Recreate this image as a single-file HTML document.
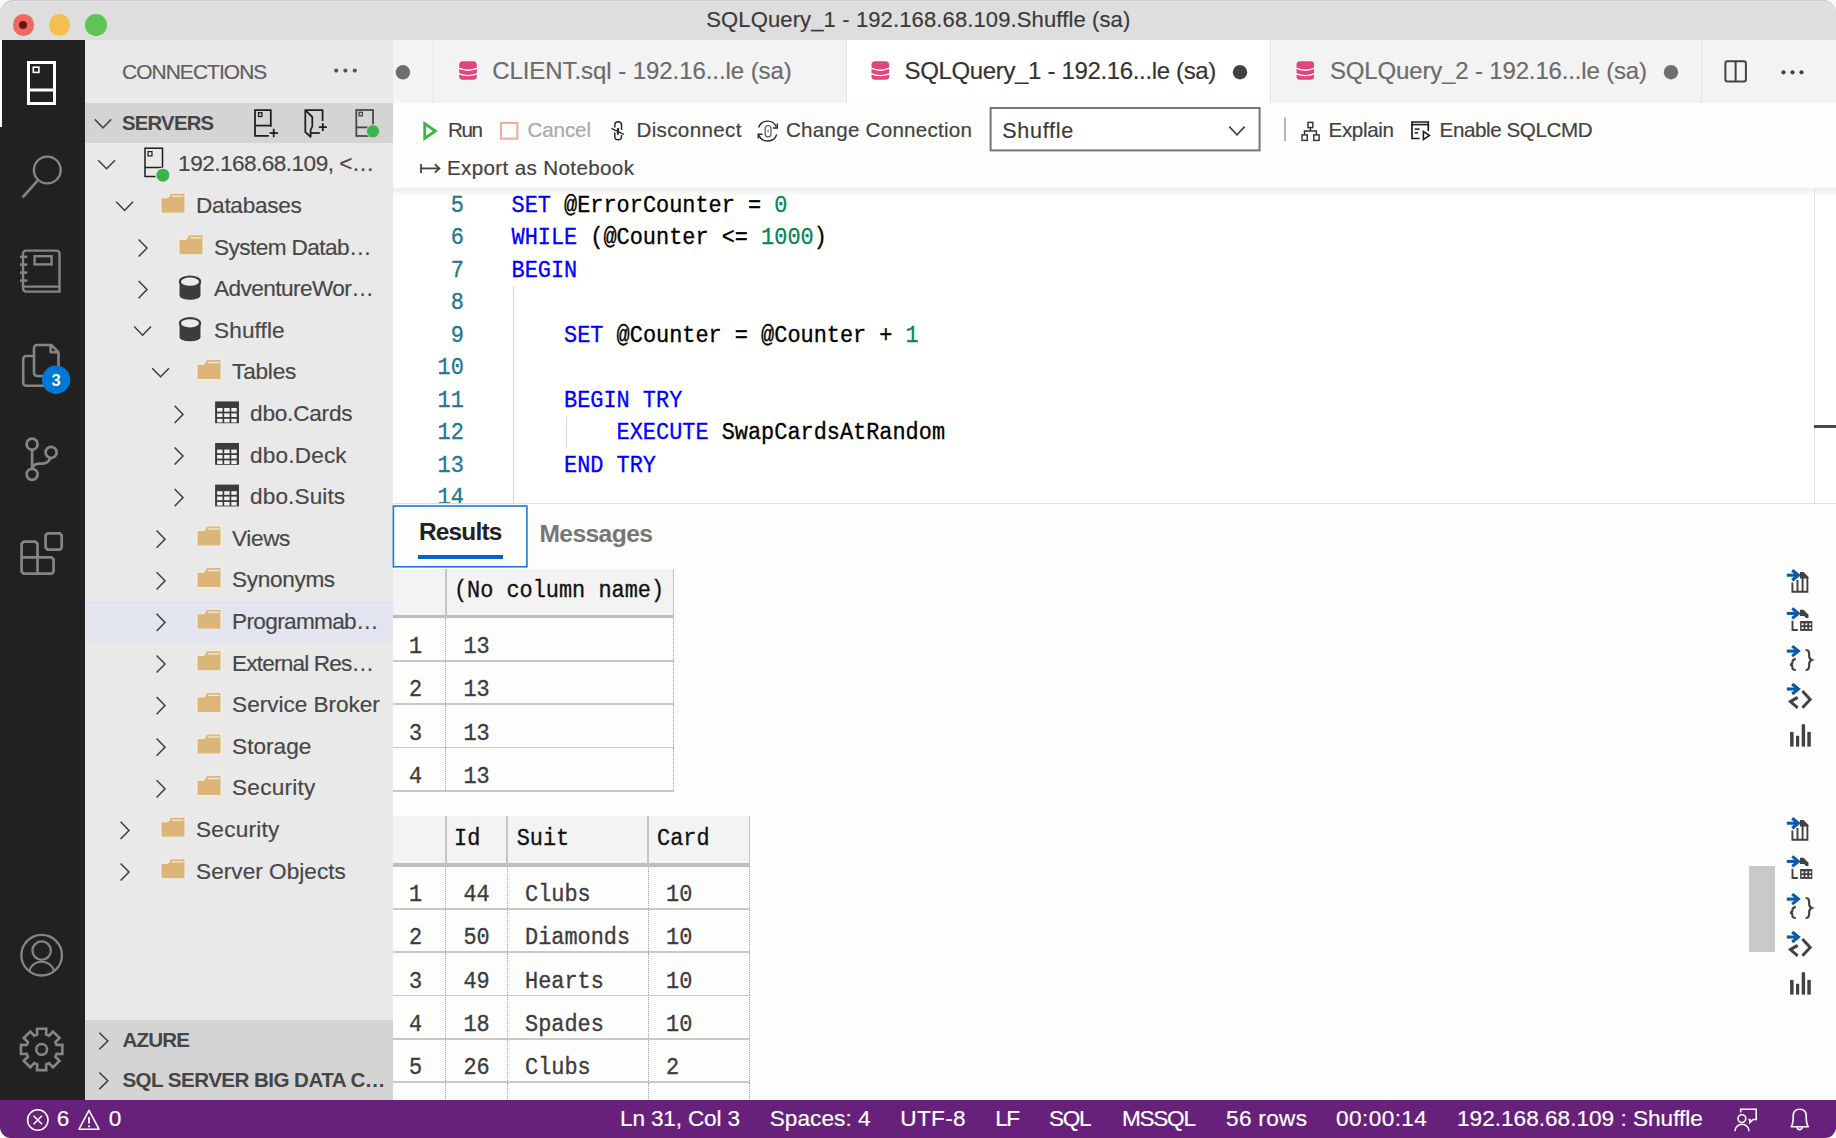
<!DOCTYPE html>
<html><head><meta charset="utf-8"><style>
html,body{margin:0;padding:0;width:1836px;height:1138px;overflow:hidden;background:#fff;}
.a{position:absolute;}
.t{position:absolute;white-space:pre;-webkit-text-stroke:0.18px currentColor;}
.mono{font-family:'Liberation Mono',monospace;font-size:21.9px;line-height:21.9px;white-space:pre;transform:scaleY(1.12);transform-origin:0 17.39px;-webkit-text-stroke:0.3px currentColor;}
svg.a{overflow:visible;}
</style></head><body>
<div class="a" style="left:0px;top:0px;width:1836px;height:1138px;background:#f8f8f8;"></div>
<div class="a" style="left:0px;top:0.4px;width:1836px;height:39.6px;background:#dedede;border-radius:13px 13px 0 0;box-sizing:border-box;border-top:0.9px solid #cacaca;"></div>
<div class="a" style="left:13px;top:1.3px;width:1810px;height:0.8px;background:#e9e9e9;"></div>
<div class="a" style="left:12.65px;top:14.45px;width:21.5px;height:21.5px;border-radius:50%;background:#ec6a5f;"></div>
<div class="a" style="left:48.95px;top:14.45px;width:21.5px;height:21.5px;border-radius:50%;background:#f4be50;"></div>
<div class="a" style="left:85.25px;top:14.45px;width:21.5px;height:21.5px;border-radius:50%;background:#61c555;"></div>
<div class="a" style="left:19.4px;top:21.2px;width:8px;height:8px;border-radius:50%;background:#6e1510;"></div>
<div class="a" style="left:0px;top:40px;width:85px;height:1060px;background:#212121;"></div>
<div class="a" style="left:0px;top:40px;width:2px;height:87px;background:#ffffff;"></div>
<div class="a" style="left:85px;top:40px;width:307.5px;height:1060px;background:#e9e9e9;"></div>
<div class="a" style="left:85px;top:103px;width:308px;height:40px;background:#d4d4d4;"></div>
<div class="a" style="left:85px;top:600.6px;width:308px;height:41.6px;background:#e2e4ef;"></div>
<div class="a" style="left:85px;top:1020px;width:308px;height:80px;background:#d4d4d4;"></div>
<div class="a" style="left:393px;top:188px;width:1443px;height:315px;background:#fffffe;"></div>
<div class="a" style="left:393px;top:503px;width:1443px;height:1px;background:#dddddd;"></div>
<div class="a" style="left:393px;top:504px;width:1443px;height:596px;background:#fdfdfc;"></div>
<div class="a" style="left:393px;top:40px;width:1443px;height:63px;background:#f3f3f3;"></div>
<div class="a" style="left:846px;top:40px;width:424px;height:63px;background:#ffffff;"></div>
<div class="a" style="left:433px;top:40px;width:1px;height:63px;background:#e4e4e4;"></div>
<div class="a" style="left:845.5px;top:40px;width:1px;height:63px;background:#e4e4e4;"></div>
<div class="a" style="left:1269.5px;top:40px;width:1px;height:63px;background:#e4e4e4;"></div>
<div class="a" style="left:1701px;top:40px;width:1px;height:63px;background:#e4e4e4;"></div>
<div class="a" style="left:393px;top:103px;width:1443px;height:85px;background:#fdfdfc;"></div>
<div class="a" style="left:393px;top:188px;width:1443px;height:9px;background:linear-gradient(rgba(0,0,0,0.07),rgba(0,0,0,0));"></div>
<div class="a" style="left:0px;top:1100px;width:1836px;height:38px;background:#68217a;border-radius:0 0 11px 11px;"></div>
<div class="a" style="left:393px;top:188px;width:1421px;height:315px;overflow:hidden;">
<div class="a mono" style="left:0px;width:70.8px;text-align:right;top:7.91px;color:#237893;">5</div>
<div class="a mono" style="left:118.5px;top:7.91px;white-space:pre;"><span style="color:#0000ff">SET</span><span style="color:#000000"> @ErrorCounter = </span><span style="color:#098658">0</span></div>
<div class="a mono" style="left:0px;width:70.8px;text-align:right;top:40.36px;color:#237893;">6</div>
<div class="a mono" style="left:118.5px;top:40.36px;white-space:pre;"><span style="color:#0000ff">WHILE</span><span style="color:#000000"> (@Counter &lt;= </span><span style="color:#098658">1000</span><span style="color:#000000">)</span></div>
<div class="a mono" style="left:0px;width:70.8px;text-align:right;top:72.81px;color:#237893;">7</div>
<div class="a mono" style="left:118.5px;top:72.81px;white-space:pre;"><span style="color:#0000ff">BEGIN</span></div>
<div class="a mono" style="left:0px;width:70.8px;text-align:right;top:105.26px;color:#237893;">8</div>
<div class="a mono" style="left:118.5px;top:105.26px;white-space:pre;"></div>
<div class="a mono" style="left:0px;width:70.8px;text-align:right;top:137.71px;color:#237893;">9</div>
<div class="a mono" style="left:118.5px;top:137.71px;white-space:pre;"><span style="color:#000000">    </span><span style="color:#0000ff">SET</span><span style="color:#000000"> @Counter = @Counter + </span><span style="color:#098658">1</span></div>
<div class="a mono" style="left:0px;width:70.8px;text-align:right;top:170.16px;color:#237893;">10</div>
<div class="a mono" style="left:118.5px;top:170.16px;white-space:pre;"></div>
<div class="a mono" style="left:0px;width:70.8px;text-align:right;top:202.61px;color:#237893;">11</div>
<div class="a mono" style="left:118.5px;top:202.61px;white-space:pre;"><span style="color:#000000">    </span><span style="color:#0000ff">BEGIN TRY</span></div>
<div class="a mono" style="left:0px;width:70.8px;text-align:right;top:235.06px;color:#237893;">12</div>
<div class="a mono" style="left:118.5px;top:235.06px;white-space:pre;"><span style="color:#000000">        </span><span style="color:#0000ff">EXECUTE</span><span style="color:#000000"> SwapCardsAtRandom</span></div>
<div class="a mono" style="left:0px;width:70.8px;text-align:right;top:267.51px;color:#237893;">13</div>
<div class="a mono" style="left:118.5px;top:267.51px;white-space:pre;"><span style="color:#000000">    </span><span style="color:#0000ff">END TRY</span></div>
<div class="a mono" style="left:0px;width:70.8px;text-align:right;top:299.96px;color:#237893;">14</div>
<div class="a mono" style="left:118.5px;top:299.96px;white-space:pre;"></div>
<div class="a" style="left:120px;top:97.60000000000002px;width:1px;height:217.39999999999998px;background:#d3d3d3;"></div>
<div class="a" style="left:172.5px;top:228.5px;width:1px;height:31px;background:#d3d3d3;"></div>
</div>
<div class="a" style="left:1814px;top:188px;width:1px;height:315px;background:#e4e4e4;"></div>
<div class="a" style="left:1814px;top:425px;width:22px;height:3px;background:#4b4b4b;"></div>
<svg class="a" style="left:0;top:0" width="600" height="600"><rect x="393.4" y="506" width="133.5" height="60.8" fill="none" stroke="#1a7ad4" stroke-width="1.6"/></svg>
<div class="a" style="left:417.7px;top:555px;width:85.3px;height:4px;background:#0064c8;"></div>
<div class="a" style="left:0;top:0;width:1836px;height:1100px;overflow:hidden;">
<div class="a" style="left:393px;top:568.5px;width:280.79999999999995px;height:50px;background:#f3f3f3;"></div>
<div class="a" style="left:393px;top:615.1px;width:280.79999999999995px;height:3.4px;background:#bebebe;"></div>
<div class="a" style="left:445px;top:568.5px;width:1.6px;height:50px;background:#c4c4c4;"></div>
<div class="a" style="left:672.8px;top:568.5px;width:1.6px;height:50px;background:#c4c4c4;"></div>
<div class="a mono" style="left:453.9px;top:581.11px;color:#111;">(No column name)</div>
<div class="a" style="left:393px;top:660.0px;width:280.79999999999995px;height:1.8px;background:#c8c8c8;"></div>
<div class="a" style="left:445.4px;top:618.5px;width:0;height:41.5px;border-left:1.3px dotted #a0a0a0;"></div>
<div class="a" style="left:673.2px;top:618.5px;width:0;height:41.5px;border-left:1.3px dotted #a0a0a0;"></div>
<div class="a mono" style="left:409px;top:636.91px;color:#3c3c3c;">1</div>
<div class="a mono" style="left:463.4px;top:636.91px;color:#3c3c3c;">13</div>
<div class="a" style="left:393px;top:703.3px;width:280.79999999999995px;height:1.8px;background:#c8c8c8;"></div>
<div class="a" style="left:445.4px;top:661.8px;width:0;height:41.5px;border-left:1.3px dotted #a0a0a0;"></div>
<div class="a" style="left:673.2px;top:661.8px;width:0;height:41.5px;border-left:1.3px dotted #a0a0a0;"></div>
<div class="a mono" style="left:409px;top:680.21px;color:#3c3c3c;">2</div>
<div class="a mono" style="left:463.4px;top:680.21px;color:#3c3c3c;">13</div>
<div class="a" style="left:393px;top:746.5999999999999px;width:280.79999999999995px;height:1.8px;background:#c8c8c8;"></div>
<div class="a" style="left:445.4px;top:705.1px;width:0;height:41.5px;border-left:1.3px dotted #a0a0a0;"></div>
<div class="a" style="left:673.2px;top:705.1px;width:0;height:41.5px;border-left:1.3px dotted #a0a0a0;"></div>
<div class="a mono" style="left:409px;top:723.51px;color:#3c3c3c;">3</div>
<div class="a mono" style="left:463.4px;top:723.51px;color:#3c3c3c;">13</div>
<div class="a" style="left:393px;top:789.8999999999999px;width:280.79999999999995px;height:1.8px;background:#c8c8c8;"></div>
<div class="a" style="left:445.4px;top:748.4px;width:0;height:41.5px;border-left:1.3px dotted #a0a0a0;"></div>
<div class="a" style="left:673.2px;top:748.4px;width:0;height:41.5px;border-left:1.3px dotted #a0a0a0;"></div>
<div class="a mono" style="left:409px;top:766.81px;color:#3c3c3c;">4</div>
<div class="a mono" style="left:463.4px;top:766.81px;color:#3c3c3c;">13</div>
<div class="a" style="left:393px;top:816.2px;width:356.70000000000005px;height:50.4px;background:#f3f3f3;"></div>
<div class="a" style="left:393px;top:863.2px;width:356.70000000000005px;height:3.4px;background:#bebebe;"></div>
<div class="a" style="left:445px;top:816.2px;width:1.6px;height:50.4px;background:#c4c4c4;"></div>
<div class="a" style="left:506.3px;top:816.2px;width:1.6px;height:50.4px;background:#c4c4c4;"></div>
<div class="a" style="left:647.4px;top:816.2px;width:1.6px;height:50.4px;background:#c4c4c4;"></div>
<div class="a" style="left:748.7px;top:816.2px;width:1.6px;height:50.4px;background:#c4c4c4;"></div>
<div class="a mono" style="left:454.0px;top:828.81px;color:#111;">Id</div>
<div class="a mono" style="left:516.7px;top:828.81px;color:#111;">Suit</div>
<div class="a mono" style="left:657.0px;top:828.81px;color:#111;">Card</div>
<div class="a" style="left:393px;top:908.1px;width:356.70000000000005px;height:1.8px;background:#c8c8c8;"></div>
<div class="a" style="left:445.4px;top:866.6px;width:0;height:41.5px;border-left:1.3px dotted #a0a0a0;"></div>
<div class="a" style="left:506.7px;top:866.6px;width:0;height:41.5px;border-left:1.3px dotted #a0a0a0;"></div>
<div class="a" style="left:647.8px;top:866.6px;width:0;height:41.5px;border-left:1.3px dotted #a0a0a0;"></div>
<div class="a" style="left:749.1px;top:866.6px;width:0;height:41.5px;border-left:1.3px dotted #a0a0a0;"></div>
<div class="a mono" style="left:409px;top:885.01px;color:#3c3c3c;">1</div>
<div class="a mono" style="left:463.4px;top:885.01px;color:#3c3c3c;">44</div>
<div class="a mono" style="left:525.0px;top:885.01px;color:#3c3c3c;">Clubs</div>
<div class="a mono" style="left:666.0px;top:885.01px;color:#3c3c3c;">10</div>
<div class="a" style="left:393px;top:951.4px;width:356.70000000000005px;height:1.8px;background:#c8c8c8;"></div>
<div class="a" style="left:445.4px;top:909.9px;width:0;height:41.5px;border-left:1.3px dotted #a0a0a0;"></div>
<div class="a" style="left:506.7px;top:909.9px;width:0;height:41.5px;border-left:1.3px dotted #a0a0a0;"></div>
<div class="a" style="left:647.8px;top:909.9px;width:0;height:41.5px;border-left:1.3px dotted #a0a0a0;"></div>
<div class="a" style="left:749.1px;top:909.9px;width:0;height:41.5px;border-left:1.3px dotted #a0a0a0;"></div>
<div class="a mono" style="left:409px;top:928.31px;color:#3c3c3c;">2</div>
<div class="a mono" style="left:463.4px;top:928.31px;color:#3c3c3c;">50</div>
<div class="a mono" style="left:525.0px;top:928.31px;color:#3c3c3c;">Diamonds</div>
<div class="a mono" style="left:666.0px;top:928.31px;color:#3c3c3c;">10</div>
<div class="a" style="left:393px;top:994.6999999999999px;width:356.70000000000005px;height:1.8px;background:#c8c8c8;"></div>
<div class="a" style="left:445.4px;top:953.2px;width:0;height:41.5px;border-left:1.3px dotted #a0a0a0;"></div>
<div class="a" style="left:506.7px;top:953.2px;width:0;height:41.5px;border-left:1.3px dotted #a0a0a0;"></div>
<div class="a" style="left:647.8px;top:953.2px;width:0;height:41.5px;border-left:1.3px dotted #a0a0a0;"></div>
<div class="a" style="left:749.1px;top:953.2px;width:0;height:41.5px;border-left:1.3px dotted #a0a0a0;"></div>
<div class="a mono" style="left:409px;top:971.61px;color:#3c3c3c;">3</div>
<div class="a mono" style="left:463.4px;top:971.61px;color:#3c3c3c;">49</div>
<div class="a mono" style="left:525.0px;top:971.61px;color:#3c3c3c;">Hearts</div>
<div class="a mono" style="left:666.0px;top:971.61px;color:#3c3c3c;">10</div>
<div class="a" style="left:393px;top:1038.0px;width:356.70000000000005px;height:1.8px;background:#c8c8c8;"></div>
<div class="a" style="left:445.4px;top:996.5px;width:0;height:41.5px;border-left:1.3px dotted #a0a0a0;"></div>
<div class="a" style="left:506.7px;top:996.5px;width:0;height:41.5px;border-left:1.3px dotted #a0a0a0;"></div>
<div class="a" style="left:647.8px;top:996.5px;width:0;height:41.5px;border-left:1.3px dotted #a0a0a0;"></div>
<div class="a" style="left:749.1px;top:996.5px;width:0;height:41.5px;border-left:1.3px dotted #a0a0a0;"></div>
<div class="a mono" style="left:409px;top:1014.91px;color:#3c3c3c;">4</div>
<div class="a mono" style="left:463.4px;top:1014.91px;color:#3c3c3c;">18</div>
<div class="a mono" style="left:525.0px;top:1014.91px;color:#3c3c3c;">Spades</div>
<div class="a mono" style="left:666.0px;top:1014.91px;color:#3c3c3c;">10</div>
<div class="a" style="left:393px;top:1081.3px;width:356.70000000000005px;height:1.8px;background:#c8c8c8;"></div>
<div class="a" style="left:445.4px;top:1039.8px;width:0;height:41.5px;border-left:1.3px dotted #a0a0a0;"></div>
<div class="a" style="left:506.7px;top:1039.8px;width:0;height:41.5px;border-left:1.3px dotted #a0a0a0;"></div>
<div class="a" style="left:647.8px;top:1039.8px;width:0;height:41.5px;border-left:1.3px dotted #a0a0a0;"></div>
<div class="a" style="left:749.1px;top:1039.8px;width:0;height:41.5px;border-left:1.3px dotted #a0a0a0;"></div>
<div class="a mono" style="left:409px;top:1058.21px;color:#3c3c3c;">5</div>
<div class="a mono" style="left:463.4px;top:1058.21px;color:#3c3c3c;">26</div>
<div class="a mono" style="left:525.0px;top:1058.21px;color:#3c3c3c;">Clubs</div>
<div class="a mono" style="left:666.0px;top:1058.21px;color:#3c3c3c;">2</div>
<div class="a" style="left:393px;top:1124.6px;width:356.70000000000005px;height:1.8px;background:#c8c8c8;"></div>
<div class="a" style="left:445.4px;top:1083.1px;width:0;height:41.5px;border-left:1.3px dotted #a0a0a0;"></div>
<div class="a" style="left:506.7px;top:1083.1px;width:0;height:41.5px;border-left:1.3px dotted #a0a0a0;"></div>
<div class="a" style="left:647.8px;top:1083.1px;width:0;height:41.5px;border-left:1.3px dotted #a0a0a0;"></div>
<div class="a" style="left:749.1px;top:1083.1px;width:0;height:41.5px;border-left:1.3px dotted #a0a0a0;"></div>
<div class="a mono" style="left:463.4px;top:1101.51px;color:#3c3c3c;"></div>
<div class="a mono" style="left:525.0px;top:1101.51px;color:#3c3c3c;"></div>
<div class="a mono" style="left:666.0px;top:1101.51px;color:#3c3c3c;"></div>
</div>
<div class="a" style="left:1749px;top:865.8px;width:25.5px;height:86.6px;background:#c9c9c9;"></div>
<svg class="a" style="left:0;top:0" width="1836" height="1138" viewBox="0 0 1836 1138"><g fill="none" stroke="#ffffff" stroke-width="3"><rect x="28.5" y="62.5" width="26" height="41"/><line x1="28.5" y1="90" x2="54.5" y2="90"/><rect x="33.3" y="67.2" width="5.6" height="5.2" stroke-width="1.6"/></g><g fill="none" stroke="#858585" stroke-width="2.4"><circle cx="47.3" cy="170" r="13.4"/><line x1="37.6" y1="180.6" x2="22.6" y2="197.4" stroke-width="2.6"/></g><g fill="none" stroke="#858585" stroke-width="2.4"><path d="M26,250.6 H56.5 a3,3 0 0 1 3,3 V291.6 H26 a3,3 0 0 1 -3,-3 V253.6 a3,3 0 0 1 3,-3 Z"/><line x1="23" y1="286.6" x2="59.5" y2="286.6"/><rect x="34.6" y="256.2" width="17" height="8.2"/><line x1="20" y1="256.8" x2="27.4" y2="256.8"/><line x1="20" y1="264.6" x2="27.4" y2="264.6"/><line x1="20" y1="272.6" x2="27.4" y2="272.6"/><line x1="20" y1="280.6" x2="27.4" y2="280.6"/></g><g fill="none" stroke="#858585" stroke-width="2.6" stroke-linejoin="round"><path d="M34,356 H26.2 a3,3 0 0 0 -3,3 V382.7 a3,3 0 0 0 3,3 H44"/><path d="M37,345 H51.3 L58.5,352.2 V376 H37 a3,3 0 0 1 -3,-3 V348 a3,3 0 0 1 3,-3 Z"/><path d="M50.6,345.5 V352.2 H58"/></g><circle cx="56.1" cy="379.8" r="14.2" fill="#0078d4"/><text x="56.1" y="385.6" text-anchor="middle" font-family="Liberation Sans" font-weight="bold" font-size="16.5" fill="#fff">3</text><g fill="none" stroke="#858585" stroke-width="2.7"><circle cx="32.1" cy="444.2" r="5.5"/><circle cx="32.1" cy="474.3" r="5.5"/><circle cx="51.1" cy="452.4" r="5.5"/><path d="M32.1,449.7 V468.8"/><path d="M50.2,457.8 C49,462 46,463.6 42,463.6 H39 C35,463.6 33,465.5 32.6,468.5"/></g><g fill="none" stroke="#858585" stroke-width="2.7" stroke-linejoin="round"><path d="M23.6,541.7 H35.5 L37.5,543.7 V557.4 H51.6 L53.6,559.4 V571.7 L51.6,573.7 H23.6 L21.6,571.7 V543.7 Z"/><path d="M21.6,557.4 H37.5 V573.7"/><path d="M47.6,533.3 H59.7 L61.7,535.3 V547.7 L59.7,549.7 H47.6 L45.6,547.7 V535.3 Z"/></g><g fill="none" stroke="#858585" stroke-width="2.3"><circle cx="41.65" cy="955.2" r="20.3"/><circle cx="41.65" cy="950.6" r="9.2"/><path d="M29.2,970.6 A13.1,13.1 0 0 1 54.1,970.6"/></g><g fill="none" stroke="#858585" stroke-width="2.6" stroke-linejoin="miter"><polygon points="37.19,1034.45 37.02,1028.71 46.28,1028.71 46.11,1034.45 49.07,1035.68 53.01,1031.50 59.55,1038.04 55.37,1041.98 56.60,1044.94 62.34,1044.77 62.34,1054.03 56.60,1053.86 55.37,1056.82 59.55,1060.76 53.01,1067.30 49.07,1063.12 46.11,1064.35 46.28,1070.09 37.02,1070.09 37.19,1064.35 34.23,1063.12 30.29,1067.30 23.75,1060.76 27.93,1056.82 26.70,1053.86 20.96,1054.03 20.96,1044.77 26.70,1044.94 27.93,1041.98 23.75,1038.04 30.29,1031.50 34.23,1035.68"/><circle cx="41.65" cy="1049.4" r="5.4"/></g><circle cx="336.2" cy="70.6" r="2.1" fill="#555"/><circle cx="345.4" cy="70.6" r="2.1" fill="#555"/><circle cx="354.8" cy="70.6" r="2.1" fill="#555"/><path d="M94.8,119.4 L103,127.8 L111.2,119.4" fill="none" stroke="#4a4a4a" stroke-width="1.6"/><g fill="none" stroke="#1e1e1e" stroke-width="1.75"><path d="M268.8,135.8 H255 V110 H270.8 V126.8"/><line x1="255" y1="125.6" x2="270.8" y2="125.6"/><rect x="258.5" y="112.7" width="3.4" height="3.8" stroke-width="1.3"/><line x1="269.6" y1="133" x2="278" y2="133"/><line x1="273.7" y1="128.8" x2="273.7" y2="137.2"/></g><g fill="none" stroke="#1e1e1e" stroke-width="1.75" stroke-linejoin="round"><path d="M305.3,110.2 H322.6 V120.9"/><path d="M305.3,110.2 L312.3,117 V126.3 L310.6,130 V136.8 L305.3,132 Z"/><line x1="311" y1="133" x2="319.9" y2="133"/><line x1="318.8" y1="127.1" x2="326.8" y2="127.1"/><line x1="322.8" y1="123.1" x2="322.8" y2="131.1"/></g><g fill="none" stroke="#454545" stroke-width="1.75"><rect x="356.3" y="110" width="16.7" height="26"/><line x1="356.3" y1="127.4" x2="373" y2="127.4"/><rect x="359.1" y="112.3" width="3.2" height="3.5" stroke-width="1.3"/></g><circle cx="373" cy="131.3" r="6.6" fill="#3cb44b" stroke="#d4d4d4" stroke-width="1"/><path d="M98.2,160.2 L106.6,168.8 L115.0,160.2" fill="none" stroke="#3c3c3c" stroke-width="1.5"/><g fill="none" stroke="#1e1e1e" stroke-width="1.5"><rect x="145" y="148.2" width="17.5" height="28.3"/><line x1="145" y1="167.5" x2="162.5" y2="167.5"/><rect x="148" y="151.6" width="4" height="4.3" stroke-width="1.2"/></g><circle cx="162.9" cy="175.2" r="7.1" fill="#3bb34a" stroke="#e9e9e9" stroke-width="1.2"/><path d="M116.2,201.8 L124.6,210.4 L133.0,201.8" fill="none" stroke="#3c3c3c" stroke-width="1.5"/><path d="M161.0,197.8 H168.2 L170.6,193.2 H185.0 V213.2 H161.0 Z" fill="#dcb579" stroke="#f4f1ea" stroke-width="1"/><line x1="171.8" y1="196.2" x2="183.4" y2="196.2" stroke="#f3ead8" stroke-width="1.3"/><path d="M138.6,239.4 L147.0,248.0 L138.6,256.6" fill="none" stroke="#3c3c3c" stroke-width="1.5"/><path d="M179.0,239.4 H186.2 L188.6,234.8 H203.0 V254.8 H179.0 Z" fill="#dcb579" stroke="#f4f1ea" stroke-width="1"/><line x1="189.8" y1="237.8" x2="201.4" y2="237.8" stroke="#f3ead8" stroke-width="1.3"/><path d="M138.6,281.0 L147.0,289.6 L138.6,298.2" fill="none" stroke="#3c3c3c" stroke-width="1.5"/><g><path d="M179.0,281.8 V295.7 A11,4.6 0 0 0 201.0,295.7 V281.8 Z" fill="#3c3c3c" stroke="#f5f5f5" stroke-width="1"/><ellipse cx="190.0" cy="281.7" rx="10.1" ry="5.2" fill="#ececec" stroke="#3c3c3c" stroke-width="2.2"/></g><path d="M134.2,326.6 L142.6,335.2 L151.0,326.6" fill="none" stroke="#3c3c3c" stroke-width="1.5"/><g><path d="M179.0,323.4 V337.3 A11,4.6 0 0 0 201.0,337.3 V323.4 Z" fill="#3c3c3c" stroke="#f5f5f5" stroke-width="1"/><ellipse cx="190.0" cy="323.3" rx="10.1" ry="5.2" fill="#ececec" stroke="#3c3c3c" stroke-width="2.2"/></g><path d="M152.2,368.2 L160.6,376.8 L169.0,368.2" fill="none" stroke="#3c3c3c" stroke-width="1.5"/><path d="M197.0,364.2 H204.2 L206.6,359.6 H221.0 V379.6 H197.0 Z" fill="#dcb579" stroke="#f4f1ea" stroke-width="1"/><line x1="207.8" y1="362.6" x2="219.4" y2="362.6" stroke="#f3ead8" stroke-width="1.3"/><path d="M174.6,405.8 L183.0,414.4 L174.6,423.0" fill="none" stroke="#3c3c3c" stroke-width="1.5"/><g><rect x="215.1" y="401.4" width="23.9" height="21.8" fill="#3c3c3c"/><rect x="217.1" y="408.0" width="5.4" height="3.6" fill="#f2f2f2"/><rect x="217.1" y="413.4" width="5.4" height="3.6" fill="#f2f2f2"/><rect x="217.1" y="418.8" width="5.4" height="3.6" fill="#f2f2f2"/><rect x="224.2" y="408.0" width="5.4" height="3.6" fill="#f2f2f2"/><rect x="224.2" y="413.4" width="5.4" height="3.6" fill="#f2f2f2"/><rect x="224.2" y="418.8" width="5.4" height="3.6" fill="#f2f2f2"/><rect x="231.3" y="408.0" width="5.4" height="3.6" fill="#f2f2f2"/><rect x="231.3" y="413.4" width="5.4" height="3.6" fill="#f2f2f2"/><rect x="231.3" y="418.8" width="5.4" height="3.6" fill="#f2f2f2"/></g><path d="M174.6,447.4 L183.0,456.0 L174.6,464.6" fill="none" stroke="#3c3c3c" stroke-width="1.5"/><g><rect x="215.1" y="443.0" width="23.9" height="21.8" fill="#3c3c3c"/><rect x="217.1" y="449.6" width="5.4" height="3.6" fill="#f2f2f2"/><rect x="217.1" y="455.0" width="5.4" height="3.6" fill="#f2f2f2"/><rect x="217.1" y="460.4" width="5.4" height="3.6" fill="#f2f2f2"/><rect x="224.2" y="449.6" width="5.4" height="3.6" fill="#f2f2f2"/><rect x="224.2" y="455.0" width="5.4" height="3.6" fill="#f2f2f2"/><rect x="224.2" y="460.4" width="5.4" height="3.6" fill="#f2f2f2"/><rect x="231.3" y="449.6" width="5.4" height="3.6" fill="#f2f2f2"/><rect x="231.3" y="455.0" width="5.4" height="3.6" fill="#f2f2f2"/><rect x="231.3" y="460.4" width="5.4" height="3.6" fill="#f2f2f2"/></g><path d="M174.6,489.0 L183.0,497.6 L174.6,506.2" fill="none" stroke="#3c3c3c" stroke-width="1.5"/><g><rect x="215.1" y="484.6" width="23.9" height="21.8" fill="#3c3c3c"/><rect x="217.1" y="491.2" width="5.4" height="3.6" fill="#f2f2f2"/><rect x="217.1" y="496.6" width="5.4" height="3.6" fill="#f2f2f2"/><rect x="217.1" y="502.0" width="5.4" height="3.6" fill="#f2f2f2"/><rect x="224.2" y="491.2" width="5.4" height="3.6" fill="#f2f2f2"/><rect x="224.2" y="496.6" width="5.4" height="3.6" fill="#f2f2f2"/><rect x="224.2" y="502.0" width="5.4" height="3.6" fill="#f2f2f2"/><rect x="231.3" y="491.2" width="5.4" height="3.6" fill="#f2f2f2"/><rect x="231.3" y="496.6" width="5.4" height="3.6" fill="#f2f2f2"/><rect x="231.3" y="502.0" width="5.4" height="3.6" fill="#f2f2f2"/></g><path d="M156.6,530.6 L165.0,539.2 L156.6,547.8" fill="none" stroke="#3c3c3c" stroke-width="1.5"/><path d="M197.0,530.6 H204.2 L206.6,526.0 H221.0 V546.0 H197.0 Z" fill="#dcb579" stroke="#f4f1ea" stroke-width="1"/><line x1="207.8" y1="529.0" x2="219.4" y2="529.0" stroke="#f3ead8" stroke-width="1.3"/><path d="M156.6,572.2 L165.0,580.8 L156.6,589.4" fill="none" stroke="#3c3c3c" stroke-width="1.5"/><path d="M197.0,572.2 H204.2 L206.6,567.6 H221.0 V587.6 H197.0 Z" fill="#dcb579" stroke="#f4f1ea" stroke-width="1"/><line x1="207.8" y1="570.6" x2="219.4" y2="570.6" stroke="#f3ead8" stroke-width="1.3"/><path d="M156.6,613.8 L165.0,622.4 L156.6,631.0" fill="none" stroke="#3c3c3c" stroke-width="1.5"/><path d="M197.0,613.8 H204.2 L206.6,609.2 H221.0 V629.2 H197.0 Z" fill="#dcb579" stroke="#f4f1ea" stroke-width="1"/><line x1="207.8" y1="612.2" x2="219.4" y2="612.2" stroke="#f3ead8" stroke-width="1.3"/><path d="M156.6,655.4 L165.0,664.0 L156.6,672.6" fill="none" stroke="#3c3c3c" stroke-width="1.5"/><path d="M197.0,655.4 H204.2 L206.6,650.8 H221.0 V670.8 H197.0 Z" fill="#dcb579" stroke="#f4f1ea" stroke-width="1"/><line x1="207.8" y1="653.8" x2="219.4" y2="653.8" stroke="#f3ead8" stroke-width="1.3"/><path d="M156.6,697.0 L165.0,705.6 L156.6,714.2" fill="none" stroke="#3c3c3c" stroke-width="1.5"/><path d="M197.0,697.0 H204.2 L206.6,692.4 H221.0 V712.4 H197.0 Z" fill="#dcb579" stroke="#f4f1ea" stroke-width="1"/><line x1="207.8" y1="695.4" x2="219.4" y2="695.4" stroke="#f3ead8" stroke-width="1.3"/><path d="M156.6,738.6 L165.0,747.2 L156.6,755.8" fill="none" stroke="#3c3c3c" stroke-width="1.5"/><path d="M197.0,738.6 H204.2 L206.6,734.0 H221.0 V754.0 H197.0 Z" fill="#dcb579" stroke="#f4f1ea" stroke-width="1"/><line x1="207.8" y1="737.0" x2="219.4" y2="737.0" stroke="#f3ead8" stroke-width="1.3"/><path d="M156.6,780.2 L165.0,788.8 L156.6,797.4" fill="none" stroke="#3c3c3c" stroke-width="1.5"/><path d="M197.0,780.2 H204.2 L206.6,775.6 H221.0 V795.6 H197.0 Z" fill="#dcb579" stroke="#f4f1ea" stroke-width="1"/><line x1="207.8" y1="778.6" x2="219.4" y2="778.6" stroke="#f3ead8" stroke-width="1.3"/><path d="M120.6,821.8 L129.0,830.4 L120.6,839.0" fill="none" stroke="#3c3c3c" stroke-width="1.5"/><path d="M161.0,821.8 H168.2 L170.6,817.2 H185.0 V837.2 H161.0 Z" fill="#dcb579" stroke="#f4f1ea" stroke-width="1"/><line x1="171.8" y1="820.2" x2="183.4" y2="820.2" stroke="#f3ead8" stroke-width="1.3"/><path d="M120.6,863.4 L129.0,872.0 L120.6,880.6" fill="none" stroke="#3c3c3c" stroke-width="1.5"/><path d="M161.0,863.4 H168.2 L170.6,858.8 H185.0 V878.8 H161.0 Z" fill="#dcb579" stroke="#f4f1ea" stroke-width="1"/><line x1="171.8" y1="861.8" x2="183.4" y2="861.8" stroke="#f3ead8" stroke-width="1.3"/><path d="M99.4,1032.7 L107.8,1041.0 L99.4,1049.3" fill="none" stroke="#3c3c3c" stroke-width="1.5"/><path d="M99.4,1072.5 L107.8,1080.8 L99.4,1089.1" fill="none" stroke="#3c3c3c" stroke-width="1.5"/><circle cx="402.9" cy="72.3" r="7.2" fill="#6e6e6e"/><g><rect x="459.2" y="61.2" width="17.6" height="18.6" rx="3.5" fill="#e0457b"/><path d="M458.7,68.2 Q468.0,72.2 477.3,68.2" fill="none" stroke="#fff" stroke-width="1.4"/><path d="M458.7,73.6 Q468.0,77.6 477.3,73.6" fill="none" stroke="#fff" stroke-width="1.4"/></g><g><rect x="871.5" y="61.2" width="17.6" height="18.6" rx="3.5" fill="#e0457b"/><path d="M871.0,68.2 Q880.3,72.2 889.6,68.2" fill="none" stroke="#fff" stroke-width="1.4"/><path d="M871.0,73.6 Q880.3,77.6 889.6,73.6" fill="none" stroke="#fff" stroke-width="1.4"/></g><g><rect x="1296.5" y="61.2" width="17.6" height="18.6" rx="3.5" fill="#e0457b"/><path d="M1296.0,68.2 Q1305.3,72.2 1314.6,68.2" fill="none" stroke="#fff" stroke-width="1.4"/><path d="M1296.0,73.6 Q1305.3,77.6 1314.6,73.6" fill="none" stroke="#fff" stroke-width="1.4"/></g><circle cx="1240" cy="72.2" r="7.2" fill="#424242"/><circle cx="1671" cy="72.2" r="7.2" fill="#6e6e6e"/><g fill="none" stroke="#424242" stroke-width="2"><rect x="1725.4" y="61.2" width="20.5" height="20.4" rx="2"/><line x1="1735.6" y1="61.2" x2="1735.6" y2="81.6"/></g><circle cx="1783.5" cy="72.3" r="2.1" fill="#424242"/><circle cx="1792.5" cy="72.3" r="2.1" fill="#424242"/><circle cx="1801.5" cy="72.3" r="2.1" fill="#424242"/><path d="M424.7,123.6 V138.3 L435.4,131 Z" fill="none" stroke="#3ab445" stroke-width="2.8" stroke-linejoin="miter"/><rect x="501" y="122.9" width="16.4" height="15.7" fill="none" stroke="#eeab99" stroke-width="2"/><g fill="none" stroke="#2a2a2a" stroke-width="1.5"><path d="M614.8,127.4 V125 A3.35,3.35 0 0 1 621.5,125 V130"/><path d="M614.8,132.6 V136.5 A3.35,3.35 0 0 0 621.5,136.5 V135"/><line x1="618" y1="128.1" x2="618" y2="134.6" stroke-width="2.2"/><line x1="611.4" y1="128.3" x2="623.9" y2="134.3" stroke-width="1.3"/></g><g fill="none" stroke="#2a2a2a" stroke-width="1.4"><path d="M758.6,127.5 A9.5,9.5 0 0 1 776.3,126.8"/><path d="M777.3,123.6 V128 H773"/><path d="M776.7,134.5 A9.5,9.5 0 0 1 758.9,135.2"/><path d="M758.2,138.6 V134.2 H762.5"/><rect x="765.2" y="125.6" width="5.8" height="11.2" rx="2.9" stroke="#6a6a6a"/><line x1="768.1" y1="129.6" x2="768.1" y2="132.6" stroke="#777" stroke-width="1.2"/></g><rect x="990.6" y="108" width="269" height="42.4" fill="#ffffff" stroke="#767676" stroke-width="2"/><path d="M1229.3,126.6 L1237,134.8 L1244.7,126.6" fill="none" stroke="#424242" stroke-width="1.7"/><line x1="1285" y1="117.4" x2="1285" y2="141" stroke="#9d9d9d" stroke-width="1.5"/><g fill="none" stroke="#333" stroke-width="1.45"><rect x="1308" y="122.4" width="4.8" height="5.2"/><line x1="1310.4" y1="127.6" x2="1310.4" y2="131"/><path d="M1304.5,134.8 V131 H1316.4 V134.8"/><rect x="1302" y="134.9" width="5.3" height="5.5"/><rect x="1313.8" y="134.9" width="5.3" height="5.5"/></g><g fill="none" stroke="#1e1e1e" stroke-width="1.7"><path d="M1419.6,138.5 H1412 V122 H1428.3 V131"/><line x1="1412" y1="124.6" x2="1428.3" y2="124.6" stroke-width="1.6"/><line x1="1414.6" y1="129.1" x2="1419.6" y2="129.1" stroke-width="1.5"/><line x1="1414.6" y1="132.9" x2="1418" y2="132.9" stroke-width="1.5"/><path d="M1423.4,131.4 V139.6 L1429.4,135.5 Z" stroke-width="1.6" stroke-linejoin="miter"/></g><g fill="none" stroke="#424242" stroke-width="1.8"><line x1="421" y1="164" x2="421" y2="172.9"/><line x1="421" y1="168.4" x2="439.2" y2="168.4"/><path d="M434.8,164.2 L439.4,168.4 L434.8,172.6"/></g><g fill="none" stroke="#424242" stroke-width="1.9"><path d="M1792.4,582.5 V591.8 H1807.4 V577"/><line x1="1797.5" y1="580" x2="1797.5" y2="591.8"/><line x1="1802.6" y1="575" x2="1802.6" y2="591.8"/></g><path d="M1800,571.9 H1803.5 L1808.3,576.8 V578.5 H1800 Z" fill="#424242"/><g fill="none" stroke="#0b5aa8" stroke-width="3.1"><line x1="1786.8" y1="575.2" x2="1797.6" y2="575.2"/><path d="M1792.2,570.2 L1798.4,575.2 L1792.2,580.2" stroke-linejoin="miter"/></g><path d="M1800,609.8 H1803.5 L1808.5,614.8 V618 H1806 L1804,616 H1800 Z" fill="#424242"/><path d="M1792.5,620.7 V630 H1797.8" fill="none" stroke="#424242" stroke-width="1.9"/><rect x="1800.1" y="621" width="12.2" height="9.9" fill="#424242"/><rect x="1801.6" y="623.3" width="1.9" height="1.9" fill="#fff"/><rect x="1801.6" y="627.1" width="1.9" height="1.9" fill="#fff"/><rect x="1805.4" y="623.3" width="1.9" height="1.9" fill="#fff"/><rect x="1805.4" y="627.1" width="1.9" height="1.9" fill="#fff"/><rect x="1809.2" y="623.3" width="1.9" height="1.9" fill="#fff"/><rect x="1809.2" y="627.1" width="1.9" height="1.9" fill="#fff"/><g fill="none" stroke="#0b5aa8" stroke-width="3.1"><line x1="1786.8" y1="613.4" x2="1797.6" y2="613.4"/><path d="M1792.2,608.4 L1798.4,613.4 L1792.2,618.4" stroke-linejoin="miter"/></g><path d="M1795.8,659.2 C1792.5,659.2 1792.3,661 1792.3,663 C1792.3,664.4 1790,664.6 1790,664.6 C1790,664.6 1792.3,665 1792.3,666.5 C1792.3,668.6 1792.5,670 1795.8,670" fill="none" stroke="#424242" stroke-width="2.2"/><path d="M1805.6,650 C1809,650 1809.2,652 1809.2,656 C1809.2,659 1811.8,660 1811.8,660 C1811.8,660 1809.2,661 1809.2,664 C1809.2,668 1809,670 1805.6,670" fill="none" stroke="#424242" stroke-width="2.2"/><g fill="none" stroke="#0b5aa8" stroke-width="3.1"><line x1="1786.8" y1="651.1" x2="1797.6" y2="651.1"/><path d="M1792.2,646.1 L1798.4,651.1 L1792.2,656.1" stroke-linejoin="miter"/></g><path d="M1797.7,697.4 L1790.4,701.6 L1797.7,707.8" fill="none" stroke="#424242" stroke-width="3"/><path d="M1802.4,691 L1810.2,699.6 L1802.4,707.8" fill="none" stroke="#424242" stroke-width="3"/><g fill="none" stroke="#0b5aa8" stroke-width="3.1"><line x1="1786.8" y1="689" x2="1797.6" y2="689"/><path d="M1792.2,684 L1798.4,689 L1792.2,694" stroke-linejoin="miter"/></g><rect x="1790.1" y="731.9" width="3.5" height="14.7" fill="#424242"/><rect x="1796" y="735.8" width="3.2" height="10.8" fill="#424242"/><rect x="1801.7" y="724.3" width="3.4" height="22.3" fill="#424242"/><rect x="1807.3" y="731.9" width="3.5" height="14.7" fill="#424242"/><g fill="none" stroke="#424242" stroke-width="1.9"><path d="M1792.4,830.5 V839.8 H1807.4 V825"/><line x1="1797.5" y1="828" x2="1797.5" y2="839.8"/><line x1="1802.6" y1="823" x2="1802.6" y2="839.8"/></g><path d="M1800,819.9 H1803.5 L1808.3,824.8 V826.5 H1800 Z" fill="#424242"/><g fill="none" stroke="#0b5aa8" stroke-width="3.1"><line x1="1786.8" y1="823.2" x2="1797.6" y2="823.2"/><path d="M1792.2,818.2 L1798.4,823.2 L1792.2,828.2" stroke-linejoin="miter"/></g><path d="M1800,857.8 H1803.5 L1808.5,862.8 V866 H1806 L1804,864 H1800 Z" fill="#424242"/><path d="M1792.5,868.7 V878 H1797.8" fill="none" stroke="#424242" stroke-width="1.9"/><rect x="1800.1" y="869" width="12.2" height="9.9" fill="#424242"/><rect x="1801.6" y="871.3" width="1.9" height="1.9" fill="#fff"/><rect x="1801.6" y="875.1" width="1.9" height="1.9" fill="#fff"/><rect x="1805.4" y="871.3" width="1.9" height="1.9" fill="#fff"/><rect x="1805.4" y="875.1" width="1.9" height="1.9" fill="#fff"/><rect x="1809.2" y="871.3" width="1.9" height="1.9" fill="#fff"/><rect x="1809.2" y="875.1" width="1.9" height="1.9" fill="#fff"/><g fill="none" stroke="#0b5aa8" stroke-width="3.1"><line x1="1786.8" y1="861.4" x2="1797.6" y2="861.4"/><path d="M1792.2,856.4 L1798.4,861.4 L1792.2,866.4" stroke-linejoin="miter"/></g><path d="M1795.8,907.2 C1792.5,907.2 1792.3,909 1792.3,911 C1792.3,912.4 1790,912.6 1790,912.6 C1790,912.6 1792.3,913 1792.3,914.5 C1792.3,916.6 1792.5,918 1795.8,918" fill="none" stroke="#424242" stroke-width="2.2"/><path d="M1805.6,898 C1809,898 1809.2,900 1809.2,904 C1809.2,907 1811.8,908 1811.8,908 C1811.8,908 1809.2,909 1809.2,912 C1809.2,916 1809,918 1805.6,918" fill="none" stroke="#424242" stroke-width="2.2"/><g fill="none" stroke="#0b5aa8" stroke-width="3.1"><line x1="1786.8" y1="899.1" x2="1797.6" y2="899.1"/><path d="M1792.2,894.1 L1798.4,899.1 L1792.2,904.1" stroke-linejoin="miter"/></g><path d="M1797.7,945.4 L1790.4,949.6 L1797.7,955.8" fill="none" stroke="#424242" stroke-width="3"/><path d="M1802.4,939 L1810.2,947.6 L1802.4,955.8" fill="none" stroke="#424242" stroke-width="3"/><g fill="none" stroke="#0b5aa8" stroke-width="3.1"><line x1="1786.8" y1="937" x2="1797.6" y2="937"/><path d="M1792.2,932 L1798.4,937 L1792.2,942" stroke-linejoin="miter"/></g><rect x="1790.1" y="979.9" width="3.5" height="14.7" fill="#424242"/><rect x="1796" y="983.8" width="3.2" height="10.8" fill="#424242"/><rect x="1801.7" y="972.3" width="3.4" height="22.3" fill="#424242"/><rect x="1807.3" y="979.9" width="3.5" height="14.7" fill="#424242"/><g fill="none" stroke="#fff" stroke-width="1.6"><circle cx="37.8" cy="1120" r="10.2"/><line x1="33.6" y1="1115.8" x2="42" y2="1124.2"/><line x1="42" y1="1115.8" x2="33.6" y2="1124.2"/></g><g fill="none" stroke="#fff" stroke-width="1.6" stroke-linejoin="round"><path d="M89,1110.4 L99,1129.2 H79 Z"/><line x1="89" y1="1117" x2="89" y2="1123.6" stroke-width="1.8"/></g><circle cx="89" cy="1126.3" r="1.1" fill="#fff"/><g fill="none" stroke="#fff" stroke-width="1.6"><circle cx="1741.9" cy="1118.6" r="3.9"/><path d="M1735,1131.2 A7,7 0 0 1 1749,1131.2"/><path d="M1740.7,1112.6 V1109.3 H1756.2 V1119.5 H1753 L1749.8,1122.6 V1119.5 H1748.4"/></g><g fill="none" stroke="#fff" stroke-width="1.6" stroke-linejoin="round"><path d="M1791.3,1126.7 C1793.2,1124 1793.2,1121 1793.2,1116 C1793.2,1111.5 1796,1109.3 1799.7,1109.3 C1803.4,1109.3 1806.2,1111.5 1806.2,1116 C1806.2,1121 1806.2,1124 1808.3,1126.7 Z"/><path d="M1797.3,1127.2 A2.4,2.4 0 0 0 1802.1,1127.2"/></g></svg>
<div class="t" style="left:706.3px;top:8.58px;font-size:22px;line-height:22px;color:#3a3a3a;font-weight:normal;font-family:'Liberation Sans',sans-serif;letter-spacing:0.126px;">SQLQuery_1 - 192.168.68.109.Shuffle (sa)</div>
<div class="t" style="left:122.0px;top:61.91px;font-size:20.9px;line-height:20.9px;color:#5f5f5f;font-weight:normal;font-family:'Liberation Sans',sans-serif;letter-spacing:-0.913px;">CONNECTIONS</div>
<div class="t" style="left:122.0px;top:112.92px;font-size:20.3px;line-height:20.3px;color:#454545;font-weight:bold;font-family:'Liberation Sans',sans-serif;letter-spacing:-0.742px;-webkit-text-stroke:0;">SERVERS</div>
<div class="t" style="left:178.1px;top:153.47px;font-size:22.6px;line-height:22.6px;color:#474747;font-weight:normal;font-family:'Liberation Sans',sans-serif;letter-spacing:-0.533px;">192.168.68.109, &lt;…</div>
<div class="t" style="left:196.1px;top:195.07px;font-size:22.6px;line-height:22.6px;color:#474747;font-weight:normal;font-family:'Liberation Sans',sans-serif;letter-spacing:-0.293px;">Databases</div>
<div class="t" style="left:214.1px;top:236.67px;font-size:22.6px;line-height:22.6px;color:#474747;font-weight:normal;font-family:'Liberation Sans',sans-serif;letter-spacing:-0.586px;">System Datab…</div>
<div class="t" style="left:214.1px;top:278.27px;font-size:22.6px;line-height:22.6px;color:#474747;font-weight:normal;font-family:'Liberation Sans',sans-serif;letter-spacing:-0.570px;">AdventureWor…</div>
<div class="t" style="left:214.1px;top:319.87px;font-size:22.6px;line-height:22.6px;color:#474747;font-weight:normal;font-family:'Liberation Sans',sans-serif;letter-spacing:0.108px;">Shuffle</div>
<div class="t" style="left:232.1px;top:361.47px;font-size:22.6px;line-height:22.6px;color:#474747;font-weight:normal;font-family:'Liberation Sans',sans-serif;letter-spacing:-0.226px;">Tables</div>
<div class="t" style="left:250.1px;top:403.07px;font-size:22.6px;line-height:22.6px;color:#474747;font-weight:normal;font-family:'Liberation Sans',sans-serif;letter-spacing:-0.222px;">dbo.Cards</div>
<div class="t" style="left:250.1px;top:444.67px;font-size:22.6px;line-height:22.6px;color:#474747;font-weight:normal;font-family:'Liberation Sans',sans-serif;letter-spacing:0.160px;">dbo.Deck</div>
<div class="t" style="left:250.1px;top:486.27px;font-size:22.6px;line-height:22.6px;color:#474747;font-weight:normal;font-family:'Liberation Sans',sans-serif;letter-spacing:0.109px;">dbo.Suits</div>
<div class="t" style="left:232.1px;top:527.87px;font-size:22.6px;line-height:22.6px;color:#474747;font-weight:normal;font-family:'Liberation Sans',sans-serif;letter-spacing:-0.395px;">Views</div>
<div class="t" style="left:232.1px;top:569.47px;font-size:22.6px;line-height:22.6px;color:#474747;font-weight:normal;font-family:'Liberation Sans',sans-serif;letter-spacing:-0.344px;">Synonyms</div>
<div class="t" style="left:232.1px;top:611.07px;font-size:22.6px;line-height:22.6px;color:#474747;font-weight:normal;font-family:'Liberation Sans',sans-serif;letter-spacing:-0.672px;">Programmab…</div>
<div class="t" style="left:232.1px;top:652.67px;font-size:22.6px;line-height:22.6px;color:#474747;font-weight:normal;font-family:'Liberation Sans',sans-serif;letter-spacing:-0.831px;">External Res…</div>
<div class="t" style="left:232.1px;top:694.27px;font-size:22.6px;line-height:22.6px;color:#474747;font-weight:normal;font-family:'Liberation Sans',sans-serif;letter-spacing:-0.031px;">Service Broker</div>
<div class="t" style="left:232.1px;top:735.87px;font-size:22.6px;line-height:22.6px;color:#474747;font-weight:normal;font-family:'Liberation Sans',sans-serif;letter-spacing:0.007px;">Storage</div>
<div class="t" style="left:232.1px;top:777.47px;font-size:22.6px;line-height:22.6px;color:#474747;font-weight:normal;font-family:'Liberation Sans',sans-serif;letter-spacing:0.209px;">Security</div>
<div class="t" style="left:196.1px;top:819.07px;font-size:22.6px;line-height:22.6px;color:#474747;font-weight:normal;font-family:'Liberation Sans',sans-serif;letter-spacing:0.209px;">Security</div>
<div class="t" style="left:196.1px;top:860.67px;font-size:22.6px;line-height:22.6px;color:#474747;font-weight:normal;font-family:'Liberation Sans',sans-serif;letter-spacing:0.026px;">Server Objects</div>
<div class="t" style="left:122.4px;top:1030.46px;font-size:20.6px;line-height:20.6px;color:#454545;font-weight:bold;font-family:'Liberation Sans',sans-serif;letter-spacing:-0.839px;-webkit-text-stroke:0;">AZURE</div>
<div class="t" style="left:122.4px;top:1070.16px;font-size:20.6px;line-height:20.6px;color:#454545;font-weight:bold;font-family:'Liberation Sans',sans-serif;letter-spacing:-0.557px;-webkit-text-stroke:0;">SQL SERVER BIG DATA C…</div>
<div class="t" style="left:492.2px;top:59.38px;font-size:24px;line-height:24px;color:#6b6b6b;font-weight:normal;font-family:'Liberation Sans',sans-serif;letter-spacing:-0.066px;">CLIENT.sql - 192.16...le (sa)</div>
<div class="t" style="left:904.5px;top:59.38px;font-size:24px;line-height:24px;color:#333333;font-weight:normal;font-family:'Liberation Sans',sans-serif;letter-spacing:-0.346px;">SQLQuery_1 - 192.16...le (sa)</div>
<div class="t" style="left:1330.0px;top:59.38px;font-size:24px;line-height:24px;color:#6b6b6b;font-weight:normal;font-family:'Liberation Sans',sans-serif;letter-spacing:-0.161px;">SQLQuery_2 - 192.16...le (sa)</div>
<div class="t" style="left:448.0px;top:119.86px;font-size:20.6px;line-height:20.6px;color:#424242;font-weight:normal;font-family:'Liberation Sans',sans-serif;letter-spacing:-1.396px;">Run</div>
<div class="t" style="left:527.5px;top:119.86px;font-size:20.6px;line-height:20.6px;color:#a9a9a9;font-weight:normal;font-family:'Liberation Sans',sans-serif;letter-spacing:-0.125px;">Cancel</div>
<div class="t" style="left:636.5px;top:119.86px;font-size:20.6px;line-height:20.6px;color:#424242;font-weight:normal;font-family:'Liberation Sans',sans-serif;letter-spacing:0.333px;">Disconnect</div>
<div class="t" style="left:786.0px;top:119.86px;font-size:20.6px;line-height:20.6px;color:#424242;font-weight:normal;font-family:'Liberation Sans',sans-serif;letter-spacing:0.244px;">Change Connection</div>
<div class="t" style="left:1002.3px;top:120.60px;font-size:21.5px;line-height:21.5px;color:#3a3a3a;font-weight:normal;font-family:'Liberation Sans',sans-serif;letter-spacing:0.708px;">Shuffle</div>
<div class="t" style="left:1328.5px;top:119.86px;font-size:20.6px;line-height:20.6px;color:#424242;font-weight:normal;font-family:'Liberation Sans',sans-serif;letter-spacing:-0.344px;">Explain</div>
<div class="t" style="left:1439.6px;top:119.86px;font-size:20.6px;line-height:20.6px;color:#424242;font-weight:normal;font-family:'Liberation Sans',sans-serif;letter-spacing:-0.417px;">Enable SQLCMD</div>
<div class="t" style="left:447.0px;top:157.56px;font-size:20.6px;line-height:20.6px;color:#424242;font-weight:normal;font-family:'Liberation Sans',sans-serif;letter-spacing:0.357px;">Export as Notebook</div>
<div class="t" style="left:419.0px;top:520.05px;font-size:24.4px;line-height:24.4px;color:#222222;font-weight:bold;font-family:'Liberation Sans',sans-serif;letter-spacing:-0.807px;-webkit-text-stroke:0;">Results</div>
<div class="t" style="left:539.4px;top:521.88px;font-size:24.6px;line-height:24.6px;color:#767676;font-weight:bold;font-family:'Liberation Sans',sans-serif;letter-spacing:-0.572px;-webkit-text-stroke:0;">Messages</div>
<div class="t" style="left:56.7px;top:1108.27px;font-size:22.6px;line-height:22.6px;color:#ffffff;font-weight:normal;font-family:'Liberation Sans',sans-serif;letter-spacing:0.000px;">6</div>
<div class="t" style="left:108.8px;top:1108.27px;font-size:22.6px;line-height:22.6px;color:#ffffff;font-weight:normal;font-family:'Liberation Sans',sans-serif;letter-spacing:0.000px;">0</div>
<div class="t" style="left:620.0px;top:1108.27px;font-size:22.6px;line-height:22.6px;color:#ffffff;font-weight:normal;font-family:'Liberation Sans',sans-serif;letter-spacing:-0.170px;">Ln 31, Col 3</div>
<div class="t" style="left:769.7px;top:1108.27px;font-size:22.6px;line-height:22.6px;color:#ffffff;font-weight:normal;font-family:'Liberation Sans',sans-serif;letter-spacing:0.061px;">Spaces: 4</div>
<div class="t" style="left:900.3px;top:1108.27px;font-size:22.6px;line-height:22.6px;color:#ffffff;font-weight:normal;font-family:'Liberation Sans',sans-serif;letter-spacing:0.318px;">UTF-8</div>
<div class="t" style="left:995.3px;top:1108.27px;font-size:22.6px;line-height:22.6px;color:#ffffff;font-weight:normal;font-family:'Liberation Sans',sans-serif;letter-spacing:-1.675px;">LF</div>
<div class="t" style="left:1049.0px;top:1108.27px;font-size:22.6px;line-height:22.6px;color:#ffffff;font-weight:normal;font-family:'Liberation Sans',sans-serif;letter-spacing:-1.312px;">SQL</div>
<div class="t" style="left:1121.9px;top:1108.27px;font-size:22.6px;line-height:22.6px;color:#ffffff;font-weight:normal;font-family:'Liberation Sans',sans-serif;letter-spacing:-1.256px;">MSSQL</div>
<div class="t" style="left:1226.0px;top:1108.27px;font-size:22.6px;line-height:22.6px;color:#ffffff;font-weight:normal;font-family:'Liberation Sans',sans-serif;letter-spacing:0.311px;">56 rows</div>
<div class="t" style="left:1336.0px;top:1108.27px;font-size:22.6px;line-height:22.6px;color:#ffffff;font-weight:normal;font-family:'Liberation Sans',sans-serif;letter-spacing:0.418px;">00:00:14</div>
<div class="t" style="left:1457.0px;top:1108.27px;font-size:22.6px;line-height:22.6px;color:#ffffff;font-weight:normal;font-family:'Liberation Sans',sans-serif;letter-spacing:0.005px;">192.168.68.109 : Shuffle</div>
</body></html>
